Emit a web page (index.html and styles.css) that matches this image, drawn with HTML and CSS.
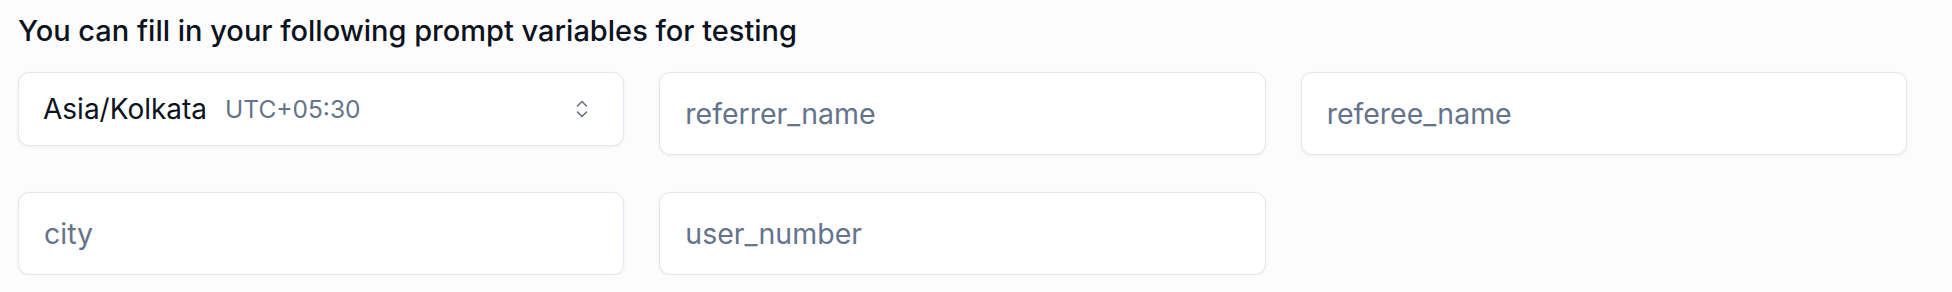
FILE: index.html
```html
<!DOCTYPE html>
<html lang="en">
<head>
<meta charset="utf-8">
<title>Prompt variables</title>
<link rel="stylesheet" href="styles.css">
</head>
<body>
<main class="panel">
  <h2 class="title">You can fill in your following prompt variables for testing</h2>
  <div class="grid">
    <div class="select">
      <span class="tz">Asia/Kolkata</span>
      <span class="offset">UTC+05:30</span>
      <svg class="chevron" width="14" height="22" viewBox="0 0 14 22" fill="none" stroke="currentColor" stroke-width="1.6" stroke-linecap="round" stroke-linejoin="round"><path d="M2.5 8 L7 3.5 L11.5 8"/><path d="M2.5 14 L7 18.5 L11.5 14"/></svg>
    </div>
    <input class="field" type="text" placeholder="referrer_name">
    <input class="field" type="text" placeholder="referee_name">
    <input class="field" type="text" placeholder="city">
    <input class="field" type="text" placeholder="user_number">
  </div>
</main>
</body>
</html>
```
FILE: styles.css
```css
html, body {
  margin: 0;
  background: #fcfcfd;
}
body {
  font-family: Inter, "Noto Sans", "Liberation Sans", sans-serif;
  color: #0f172a;
}
.panel {
  padding: 13px 45px 0 18px;
}
.title {
  margin: 0;
  font-size: 29px;
  line-height: 36px;
  font-weight: 500;
  color: #0b1220;
}
.grid {
  margin-top: 23px;
  display: grid;
  grid-template-columns: repeat(3, 1fr);
  column-gap: 35px;
  row-gap: 37px;
  align-items: start;
}
.select {
  box-sizing: border-box;
  height: 74px;
  background: #fff;
  border: 1px solid #e3e7ef;
  border-radius: 11px;
  box-shadow: 0 1px 3px rgba(15, 23, 42, 0.06);
  display: flex;
  align-items: center;
  padding: 0 34px 0 24px;
}
.tz {
  font-size: 28px;
  color: #0b1220;
}
.offset {
  margin-left: 18px;
  font-size: 24.5px;
  color: #64748b;
  flex: 1;
}
.chevron {
  color: #6b7280;
}
.field {
  box-sizing: border-box;
  width: 100%;
  height: 83px;
  margin: 0;
  background: #fff;
  border: 1px solid #e3e7ef;
  border-radius: 11px;
  box-shadow: 0 1px 3px rgba(15, 23, 42, 0.06);
  padding: 0 25px;
  font-family: Inter, "Noto Sans", "Liberation Sans", sans-serif;
  font-size: 28.5px;
  color: #0b1220;
  outline: none;
}
.field::placeholder {
  color: #64748b;
  opacity: 1;
}
```
